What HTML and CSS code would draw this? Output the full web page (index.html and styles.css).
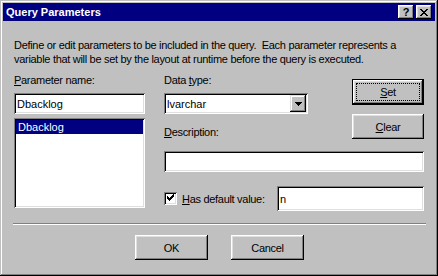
FILE: index.html
```html
<!DOCTYPE html>
<html lang="en">
<head>
    <meta charset="UTF-8">
    <title>Query Parameters</title>
    <link rel="stylesheet" href="styles.css">
</head>
<body>

<div class="window">
    <div class="title-bar">
        <span class="title">Query Parameters</span>
        <div class="title-buttons">
            <span class="title-button help">?</span>
            <span class="title-button close">
                <svg width="8" height="7" viewBox="0 0 8 7" shape-rendering="crispEdges"><path d="M0 0h2v1H0zM6 0h2v1H6zM1 1h2v1H1zM5 1h2v1H5zM2 2h4v1H2zM3 3h2v1H3zM2 4h4v1H2zM1 5h2v1H1zM5 5h2v1H5zM0 6h2v1H0zM6 6h2v1H6z"/></svg>
            </span>
        </div>
    </div>

    <div class="dialog">
        <p class="intro">Define or edit parameters to be included in the query.&nbsp; Each parameter represents a<br>variable that will be set by the layout at runtime before the query is executed.</p>

        <div class="fields">
            <div class="name-column">
                <label class="caption" for="paramName"><u>P</u>arameter name:</label>
                <input type="text" class="field name-input" id="paramName" value="Dbacklog">
                <ul class="param-list">
                    <li class="selected">Dbacklog</li>
                </ul>
            </div>

            <div class="detail-column">
                <div class="type-group">
                    <label class="caption">Data <u>t</u>ype:</label>
                    <div class="field combo">
                        <span class="combo-text">lvarchar</span>
                        <span class="combo-button">
                            <svg width="7" height="4" viewBox="0 0 7 4" shape-rendering="crispEdges"><path d="M0 0h7v1H0zM1 1h5v1H1zM2 2h3v1H2zM3 3h1v1H3z"/></svg>
                        </span>
                    </div>
                </div>

                <div class="side-buttons">
                    <button type="button" class="btn default-btn"><span class="focus-ring"><u>S</u>et</span></button>
                    <button type="button" class="btn clear-btn"><u>C</u>lear</button>
                </div>

                <label class="caption desc-label" for="paramDesc"><u>D</u>escription:</label>
                <input type="text" class="field desc-input" id="paramDesc">

                <div class="default-row">
                    <span class="checkbox">
                        <svg width="9" height="9" viewBox="0 0 9 9" shape-rendering="crispEdges"><path d="M1 2h1v3H1zM2 3h1v3H2zM3 4h1v3H3zM4 3h1v3H4zM5 2h1v3H5zM6 1h1v3H6zM7 0h1v3H7z"/></svg>
                    </span>
                    <label class="caption check-label" for="defaultValue"><u>H</u>as default value:</label>
                    <input type="text" class="field default-input" id="defaultValue" value="n">
                </div>
            </div>
        </div>

        <div class="separator"></div>

        <div class="footer-buttons">
            <button type="button" class="btn">OK</button>
            <button type="button" class="btn">Cancel</button>
        </div>
    </div>
</div>

</body>
</html>
```

FILE: styles.css
```css
html, body {
    margin: 0;
    padding: 0;
    background-color: #c0c0c0;
    font-family: "Liberation Sans", Arial, sans-serif;
    font-size: 11px;
    color: #000;
}

.window {
    width: 438px;
    height: 276px;
    box-sizing: border-box;
    padding: 3px;
    background-color: #c0c0c0;
    box-shadow: inset -1px -1px #000, inset 1px 1px #c0c0c0, inset -2px -2px #808080, inset 2px 2px #fff;
}

/* title bar */
.title-bar {
    height: 18px;
    background-color: #000080;
    color: #fff;
    display: flex;
    align-items: center;
    justify-content: space-between;
    padding: 0 3px;
}

.title {
    font-weight: bold;
}

.title-buttons {
    display: flex;
    gap: 2px;
}

.title-button {
    width: 16px;
    height: 14px;
    box-sizing: border-box;
    background-color: #c0c0c0;
    color: #000;
    display: flex;
    align-items: center;
    justify-content: center;
    font-weight: bold;
    font-size: 11px;
    line-height: 14px;
    box-shadow: inset -1px -1px #000, inset 1px 1px #fff, inset -2px -2px #808080, inset 2px 2px #dfdfdf;
}

/* dialog body */
.dialog {
    padding: 17px 10px 0 11px;
}

.intro {
    margin: 0;
    line-height: 14px;
    letter-spacing: -0.3px;
}

.fields {
    margin-top: 7px;
    display: grid;
    grid-template-columns: 131px 260px;
    column-gap: 19px;
}

.caption {
    display: block;
    line-height: 14px;
    height: 14px;
    letter-spacing: -0.3px;
}

.field {
    box-sizing: border-box;
    height: 21px;
    width: 100%;
    border: none;
    outline: none;
    margin: 0;
    padding: 0 0 0 3px;
    background-color: #fff;
    font: inherit;
    color: #000;
    box-shadow: inset 1px 1px #808080, inset -1px -1px #fff, inset 2px 2px #000, inset -2px -2px #dfdfdf;
}

.name-input {
    display: block;
    margin-top: 6px;
}

.param-list {
    list-style: none;
    margin: 4px 0 0;
    padding: 2px;
    height: 90px;
    box-sizing: border-box;
    background-color: #fff;
    box-shadow: inset 1px 1px #808080, inset -1px -1px #fff, inset 2px 2px #000, inset -2px -2px #dfdfdf;
}

.param-list li {
    height: 14px;
    line-height: 14px;
    padding-left: 2px;
}

.param-list li.selected {
    background-color: #000080;
    color: #fff;
}

.detail-column {
    display: grid;
    grid-template-columns: 144px 1fr;
    align-content: start;
}

.type-group {
    grid-column: 1;
    grid-row: 1;
}

.combo {
    margin-top: 6px;
    display: flex;
    align-items: center;
    padding: 2px;
}

.combo-text {
    flex: 1;
    padding-left: 1px;
}

.combo-button {
    width: 16px;
    height: 17px;
    box-sizing: border-box;
    background-color: #c0c0c0;
    display: flex;
    align-items: center;
    justify-content: center;
    box-shadow: inset -1px -1px #000, inset 1px 1px #dfdfdf, inset -2px -2px #808080, inset 2px 2px #fff;
}

.side-buttons {
    grid-column: 2;
    grid-row: 1 / span 2;
    justify-self: end;
    display: flex;
    flex-direction: column;
    padding-top: 6px;
    gap: 9px;
}

.btn {
    width: 73px;
    height: 25px;
    padding: 0;
    border: none;
    background-color: #c0c0c0;
    font: inherit;
    letter-spacing: -0.3px;
    color: #000;
    box-shadow: inset -1px -1px #000, inset 1px 1px #fff, inset -2px -2px #808080, inset 2px 2px #dfdfdf;
}

.side-buttons .btn {
    width: 72px;
}

.default-btn {
    height: 26px;
    padding: 4px;
    box-shadow: inset 0 0 0 1px #000, inset -2px -2px #000, inset 2px 2px #fff, inset -3px -3px #808080, inset 3px 3px #dfdfdf;
}

.focus-ring {
    display: flex;
    align-items: center;
    justify-content: center;
    height: 100%;
    box-sizing: border-box;
    border: 1px dotted #000;
}

.desc-label {
    grid-column: 1;
    grid-row: 2;
    margin-top: 11px;
}

.desc-input {
    grid-column: 1 / -1;
    margin-top: 12px;
}

.default-row {
    grid-column: 1 / -1;
    margin-top: 14px;
    display: flex;
    align-items: center;
}

.checkbox {
    width: 13px;
    height: 13px;
    box-sizing: border-box;
    padding: 2px;
    background-color: #fff;
    box-shadow: inset 1px 1px #808080, inset -1px -1px #fff, inset 2px 2px #000, inset -2px -2px #dfdfdf;
}

.checkbox svg {
    display: block;
}

.check-label {
    margin-left: 5px;
}

.default-input {
    width: 147px;
    height: 25px;
    margin-left: auto;
}

.separator {
    margin: 12px -1px 0;
    height: 0;
    border-top: 1px solid #808080;
    border-bottom: 1px solid #fff;
}

.footer-buttons {
    margin-top: 10px;
    display: flex;
    justify-content: center;
    gap: 23px;
}
```
